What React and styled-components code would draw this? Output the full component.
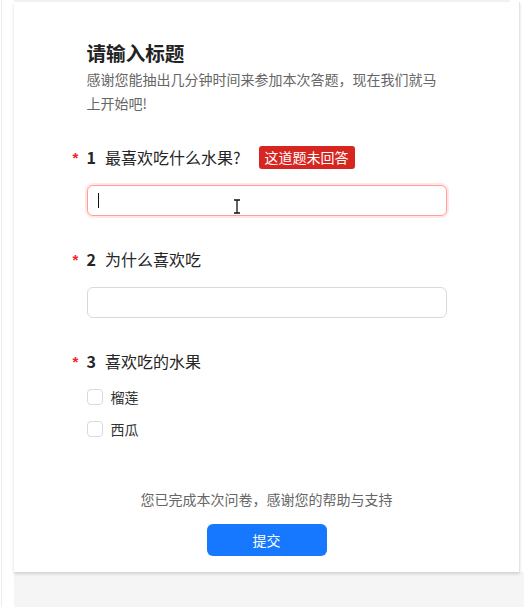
import React from 'react';
import styled, { createGlobalStyle } from 'styled-components';

var GlobalStyle = createGlobalStyle`
	html, body {
		margin: 0;
		padding: 0;
		background: #ffffff;
	}
	body {
		font-family: "Noto Sans CJK SC", "Noto Sans", "Liberation Sans", sans-serif;
		color: #262626;
	}
`;

const questions = [
	{ id: 1, title: '最喜欢吃什么水果?', type: 'input', error: '这道题未回答', focused: true },
	{ id: 2, title: '为什么喜欢吃', type: 'input' },
	{ id: 3, title: '喜欢吃的水果', type: 'checkbox', options: ['榴莲', '西瓜'] },
];

function App() {
	return (
		<>
			<GlobalStyle />
			<FrameStyled>
				<RailStyled />
				<MainStyled>
					<TopStripStyled />
					<CardStyled>
						<ContentStyled>
							<HeaderStyled>
								<TitleStyled>请输入标题</TitleStyled>
								<DescStyled>感谢您能抽出几分钟时间来参加本次答题，现在我们就马上开始吧!</DescStyled>
							</HeaderStyled>
							{questions.map(q => (
								<QuestionStyled key={q.id}>
									<QuestionHeadStyled>
										<RequiredStyled>*</RequiredStyled>
										<NumberStyled>{q.id}</NumberStyled>
										<QuestionTitleStyled>{q.title}</QuestionTitleStyled>
										{q.error ? <ErrorBadgeStyled>{q.error}</ErrorBadgeStyled> : null}
									</QuestionHeadStyled>
									{q.type === 'input' ? (
										<InputBoxStyled hasError={!!q.error}>
											{q.focused ? <CaretStyled /> : null}
											{q.focused ? (
												<PointerStyled width="8" height="15" viewBox="0 0 8 15">
													<path d="M1 1h6M4 1v13M1 14h6" stroke="#111" strokeWidth="1.3" fill="none" />
												</PointerStyled>
											) : null}
										</InputBoxStyled>
									) : (
										<OptionsStyled>
											{q.options.map(o => (
												<OptionStyled key={o}>
													<CheckboxStyled />
													<span>{o}</span>
												</OptionStyled>
											))}
										</OptionsStyled>
									)}
								</QuestionStyled>
							))}
							<FooterStyled>
								<FooterTextStyled>您已完成本次问卷，感谢您的帮助与支持</FooterTextStyled>
								<SubmitButton>提交</SubmitButton>
							</FooterStyled>
						</ContentStyled>
					</CardStyled>
					<BottomFillStyled />
				</MainStyled>
			</FrameStyled>
		</>
	);
}

var FrameStyled = styled.div`
	display: flex;
	height: 607px;
	overflow: hidden;
`;

var RailStyled = styled.div`
	width: 12px;
	margin-left: 1px;
	border-left: 1px solid #ececec;
	flex-shrink: 0;
`;

var MainStyled = styled.div`
	display: flex;
	flex-direction: column;
	flex: 1;
`;

var TopStripStyled = styled.div`
	height: 2px;
	width: 496px;
	background: #f2f2f2;
`;

var CardStyled = styled.div`
	width: 505px;
	background: #ffffff;
	border-right: 1px solid #e4e4e4;
	box-shadow: 0 2px 3px rgba(0, 0, 0, 0.14);
	position: relative;
	z-index: 1;
	padding: 37px 0 16px;
`;

var BottomFillStyled = styled.div`
	flex: 1;
	background: #f5f5f5;
`;

var ContentStyled = styled.div`
	width: 360px;
	margin: 0 auto;
	display: flex;
	flex-direction: column;
`;

var HeaderStyled = styled.div`
	display: flex;
	flex-direction: column;
	margin-bottom: 30px;
`;

var TitleStyled = styled.h1`
	margin: 0;
	font-size: 19.6px;
	line-height: 28px;
	font-weight: 700;
	color: #222222;
`;

var DescStyled = styled.p`
	margin: 0;
	font-size: 14px;
	line-height: 24px;
	color: #666666;
	width: 352px;
`;

var QuestionStyled = styled.div`
	display: flex;
	flex-direction: column;
	margin-bottom: 31px;
`;

var QuestionHeadStyled = styled.div`
	display: flex;
	align-items: center;
	height: 24px;
	margin-left: -14px;
	margin-bottom: 16px;
`;

var RequiredStyled = styled.span`
	width: 14px;
	color: #f5222d;
	font-size: 15px;
	font-weight: 700;
	font-family: "Liberation Sans", sans-serif;
	line-height: 14px;
	margin-top: 1px;
`;

var NumberStyled = styled.span`
	font-size: 16px;
	font-weight: 700;
	margin-right: 9px;
	color: #262626;
`;

var QuestionTitleStyled = styled.span`
	font-size: 16px;
	color: #262626;
`;

var ErrorBadgeStyled = styled.span`
	margin-left: 18px;
	background: #d7261f;
	color: #ffffff;
	font-size: 14px;
	line-height: 23px;
	padding: 0 6px;
	border-radius: 3px;
`;

var InputBoxStyled = styled.div`
	position: relative;
	height: 31px;
	box-sizing: border-box;
	border-radius: 6px;
	border: 1px solid ${({ hasError }) => (hasError ? '#ff9e9e' : '#d9d9d9')};
	${({ hasError }) => hasError && `
		box-shadow: 0 0 0 2px rgba(255, 120, 117, 0.18);
	`}
	background: #ffffff;
`;

var CaretStyled = styled.span`
	position: absolute;
	left: 10px;
	top: 7px;
	width: 1px;
	height: 15px;
	background: #111111;
`;

var PointerStyled = styled.svg`
	position: absolute;
	left: 145px;
	top: 13px;
`;

var OptionsStyled = styled.div`
	display: flex;
	flex-direction: column;
	gap: 10px;
	margin-top: -3px;
	margin-bottom: 12px;
`;

var OptionStyled = styled.label`
	display: flex;
	align-items: center;
	gap: 8px;
	height: 22px;
	font-size: 14px;
	color: #333333;
`;

var CheckboxStyled = styled.span`
	width: 16px;
	height: 16px;
	box-sizing: border-box;
	border: 1px solid #d9d9d9;
	border-radius: 4px;
	background: #ffffff;
`;

var FooterStyled = styled.div`
	display: flex;
	flex-direction: column;
	align-items: center;
	gap: 14px;
	margin-top: 5px;
`;

var FooterTextStyled = styled.p`
	margin: 0;
	font-size: 14px;
	line-height: 22px;
	color: #666666;
`;

var SubmitButton = styled.button`
	width: 120px;
	height: 32px;
	border: none;
	border-radius: 6px;
	background: #1677ff;
	color: #ffffff;
	font-size: 14px;
	font-family: inherit;
	cursor: pointer;
`;

export default App;
